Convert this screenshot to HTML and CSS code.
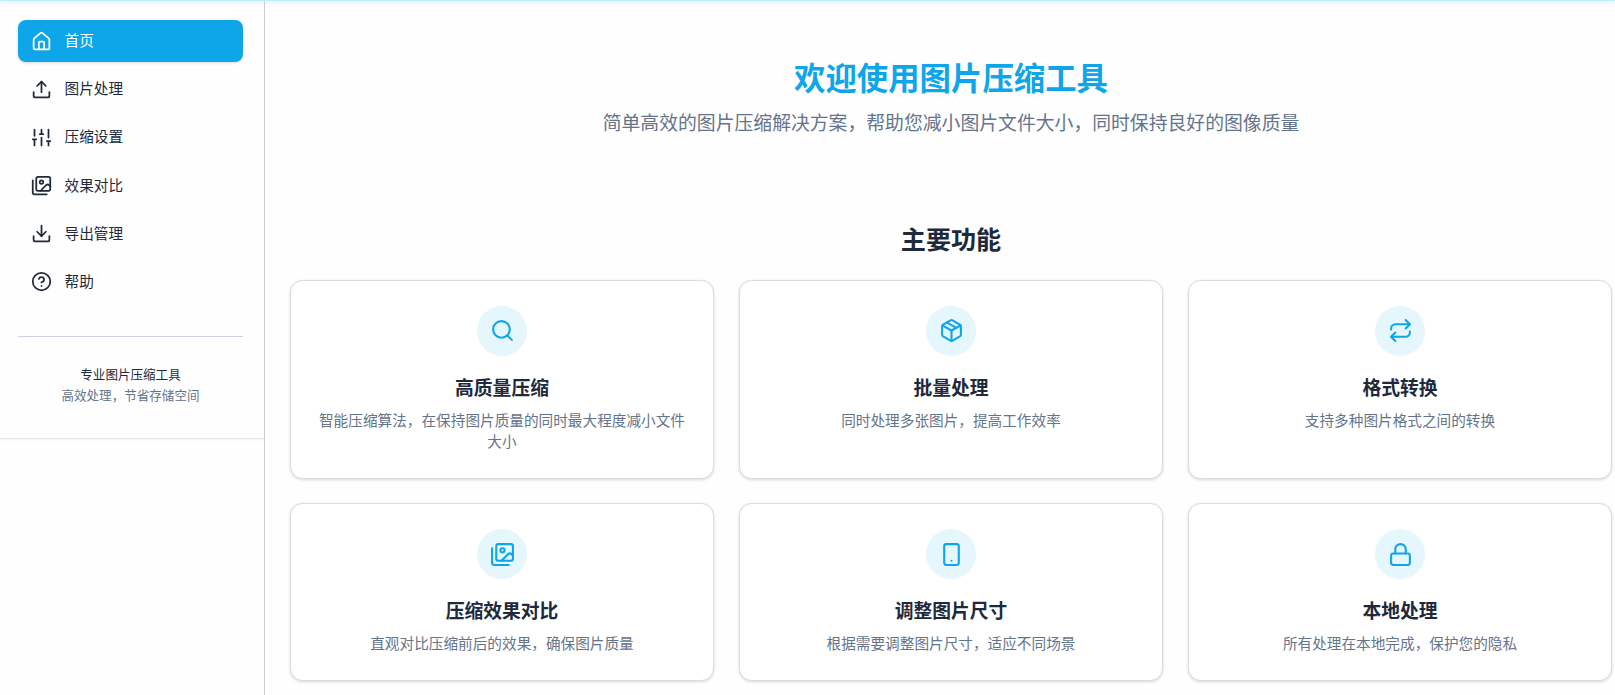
FILE: index.html
```html
<!DOCTYPE html>
<html lang="zh-CN">
<head>
  <meta charset="UTF-8">
  <meta name="viewport" content="width=device-width, initial-scale=1.0">
  <title>图片压缩工具</title>
  <link rel="stylesheet" href="styles.css">
</head>
<body>
  <header class="topbar"></header>
  <div class="layout">
    <aside class="sidebar">
      <div class="sidebar-inner">
        <nav class="nav">
          <a class="nav-item active" href="#">
            <svg class="icon" viewBox="0 0 24 24"><path d="M15 21v-8a1 1 0 0 0-1-1h-4a1 1 0 0 0-1 1v8"/><path d="M3 10a2 2 0 0 1 .709-1.528l7-5.999a2 2 0 0 1 2.582 0l7 5.999A2 2 0 0 1 21 10v9a2 2 0 0 1-2 2H5a2 2 0 0 1-2-2z"/></svg>
            <span>首页</span>
          </a>
          <a class="nav-item" href="#">
            <svg class="icon" viewBox="0 0 24 24"><path d="M21 15v4a2 2 0 0 1-2 2H5a2 2 0 0 1-2-2v-4"/><path d="m17 8-5-5-5 5"/><path d="M12 3v12"/></svg>
            <span>图片处理</span>
          </a>
          <a class="nav-item" href="#">
            <svg class="icon" viewBox="0 0 24 24"><path d="M4 21v-7M4 10V3M12 21v-9M12 8V3M20 21v-5M20 12V3M2 14h4M10 8h4M18 16h4"/></svg>
            <span>压缩设置</span>
          </a>
          <a class="nav-item" href="#">
            <svg class="icon" viewBox="0 0 24 24"><path d="M18 22H4a2 2 0 0 1-2-2V6"/><path d="m22 13-1.296-1.296a2.41 2.41 0 0 0-3.408 0L11 18"/><circle cx="12" cy="8" r="2"/><rect x="6" y="2" width="16" height="16" rx="2"/></svg>
            <span>效果对比</span>
          </a>
          <a class="nav-item" href="#">
            <svg class="icon" viewBox="0 0 24 24"><path d="M21 15v4a2 2 0 0 1-2 2H5a2 2 0 0 1-2-2v-4"/><path d="m7 10 5 5 5-5"/><path d="M12 15V3"/></svg>
            <span>导出管理</span>
          </a>
          <a class="nav-item" href="#">
            <svg class="icon" viewBox="0 0 24 24"><circle cx="12" cy="12" r="10"/><path d="M9.09 9a3 3 0 0 1 5.83 1c0 2-3 3-3 3"/><path d="M12 17h.01"/></svg>
            <span>帮助</span>
          </a>
        </nav>
        <div class="sidebar-footer">
          <p class="tool-name">专业图片压缩工具</p>
          <p>高效处理，节省存储空间</p>
        </div>
      </div>
    </aside>

    <main class="content">
      <section class="hero">
        <h1>欢迎使用图片压缩工具</h1>
        <p>简单高效的图片压缩解决方案，帮助您减小图片文件大小，同时保持良好的图像质量</p>
      </section>

      <section class="features">
        <h2>主要功能</h2>
        <div class="grid">
          <div class="card">
            <div class="card-icon">
              <svg class="icon" viewBox="0 0 24 24"><circle cx="11" cy="11" r="8"/><path d="m21 21-4.3-4.3"/></svg>
            </div>
            <h3>高质量压缩</h3>
            <p>智能压缩算法，在保持图片质量的同时最大程度减小文件大小</p>
          </div>
          <div class="card">
            <div class="card-icon">
              <svg class="icon" viewBox="0 0 24 24"><path d="m7.5 4.27 9 5.15"/><path d="M21 8a2 2 0 0 0-1-1.73l-7-4a2 2 0 0 0-2 0l-7 4A2 2 0 0 0 3 8v8a2 2 0 0 0 1 1.73l7 4a2 2 0 0 0 2 0l7-4A2 2 0 0 0 21 16Z"/><path d="m3.3 7 8.7 5 8.7-5"/><path d="M12 22V12"/></svg>
            </div>
            <h3>批量处理</h3>
            <p>同时处理多张图片，提高工作效率</p>
          </div>
          <div class="card">
            <div class="card-icon">
              <svg class="icon" viewBox="0 0 24 24"><path d="m17 2 4 4-4 4"/><path d="M3 11v-1a4 4 0 0 1 4-4h14"/><path d="m7 22-4-4 4-4"/><path d="M21 13v1a4 4 0 0 1-4 4H3"/></svg>
            </div>
            <h3>格式转换</h3>
            <p>支持多种图片格式之间的转换</p>
          </div>
          <div class="card">
            <div class="card-icon">
              <svg class="icon" viewBox="0 0 24 24"><path d="M18 22H4a2 2 0 0 1-2-2V6"/><path d="m22 13-1.296-1.296a2.41 2.41 0 0 0-3.408 0L11 18"/><circle cx="12" cy="8" r="2"/><rect x="6" y="2" width="16" height="16" rx="2"/></svg>
            </div>
            <h3>压缩效果对比</h3>
            <p>直观对比压缩前后的效果，确保图片质量</p>
          </div>
          <div class="card">
            <div class="card-icon">
              <svg class="icon" viewBox="0 0 24 24"><rect x="5" y="2" width="14" height="20" rx="2"/><path d="M12 18h.01"/></svg>
            </div>
            <h3>调整图片尺寸</h3>
            <p>根据需要调整图片尺寸，适应不同场景</p>
          </div>
          <div class="card">
            <div class="card-icon">
              <svg class="icon" viewBox="0 0 24 24"><rect x="3" y="11" width="18" height="11" rx="2"/><path d="M7 11V7a5 5 0 0 1 10 0v4"/></svg>
            </div>
            <h3>本地处理</h3>
            <p>所有处理在本地完成，保护您的隐私</p>
          </div>
        </div>
      </section>
    </main>
  </div>
</body>
</html>
```
FILE: styles.css
```css
* {
  box-sizing: border-box;
}

body {
  margin: 0;
  height: 100vh;
  overflow: hidden;
  display: flex;
  flex-direction: column;
  background: #fefefe;
  color: #1e293b;
  font-family: "Noto Sans CJK SC", sans-serif;
}

h1, h2, h3, p {
  margin: 0;
}

.icon {
  display: block;
  fill: none;
  stroke: currentColor;
  stroke-width: 2;
  stroke-linecap: round;
  stroke-linejoin: round;
}

.topbar {
  height: 1px;
  flex: none;
  background: #c3eafa;
  box-shadow: 0 1px 4px rgba(14, 165, 233, 0.45);
}

.layout {
  flex: 1;
  display: flex;
}

/* 侧边栏 */
.sidebar {
  width: 265px;
  flex: none;
  border-right: 1px solid #d0d0d2;
}

.sidebar-inner {
  height: 438px;
  padding: 19px 21px 0 18px;
  border-bottom: 1px solid #e8e8ea;
  box-shadow: 0 1px 2px rgba(0, 0, 0, 0.05);
}

.nav {
  display: flex;
  flex-direction: column;
  gap: 6.2px;
}

.nav-item {
  display: flex;
  align-items: center;
  gap: 13px;
  height: 42px;
  padding: 0 12.6px;
  border-radius: 8px;
  color: #1e293b;
  font-size: 14.65px;
  line-height: 20px;
  text-decoration: none;
}

.nav-item span {
  padding-bottom: 2px;
}

.nav-item .icon {
  width: 21px;
  height: 21px;
}

.nav-item.active {
  background: #0ea5e9;
  color: #fff;
  box-shadow: 0 1px 3px rgba(0, 0, 0, 0.15);
}

.sidebar-footer {
  margin-top: 33px;
  padding-top: 26px;
  border-top: 1px solid #cdd0de;
  text-align: center;
  font-size: 12.55px;
  line-height: 21px;
  color: #64748b;
}

.tool-name {
  color: #1e293b;
}

/* 主内容区 */
.content {
  flex: 1;
  padding: 0 3px 0 25px;
  text-align: center;
}

.hero {
  padding-top: 57px;
}

.hero h1 {
  color: #0ea5e9;
  font-size: 31.4px;
  line-height: 38px;
}

.hero p {
  margin-top: 11px;
  color: #64748b;
  font-size: 18.84px;
  line-height: 30px;
}

.features {
  margin-top: 84px;
}

.features h2 {
  font-size: 25.1px;
  line-height: 34px;
}

.grid {
  display: grid;
  grid-template-columns: repeat(3, 1fr);
  grid-template-rows: 199px 178px;
  gap: 24.5px 25px;
  margin-top: 24.5px;
}

.card {
  padding: 25px;
  border: 1px solid #d9dbe1;
  border-radius: 12.5px;
  background: #fff;
  box-shadow: 0 1px 3px rgba(0, 0, 0, 0.15);
}

.card-icon {
  width: 50px;
  height: 50px;
  margin: 0 auto 16px;
  display: flex;
  align-items: center;
  justify-content: center;
  border-radius: 50%;
  background: #e5f6fd;
  color: #0ea5e9;
}

.card-icon .icon {
  width: 25px;
  height: 25px;
}

.card h3 {
  font-size: 18.8px;
  line-height: 30px;
}

.card p {
  margin-top: 7px;
  color: #64748b;
  font-size: 14.65px;
  line-height: 21px;
}
```
